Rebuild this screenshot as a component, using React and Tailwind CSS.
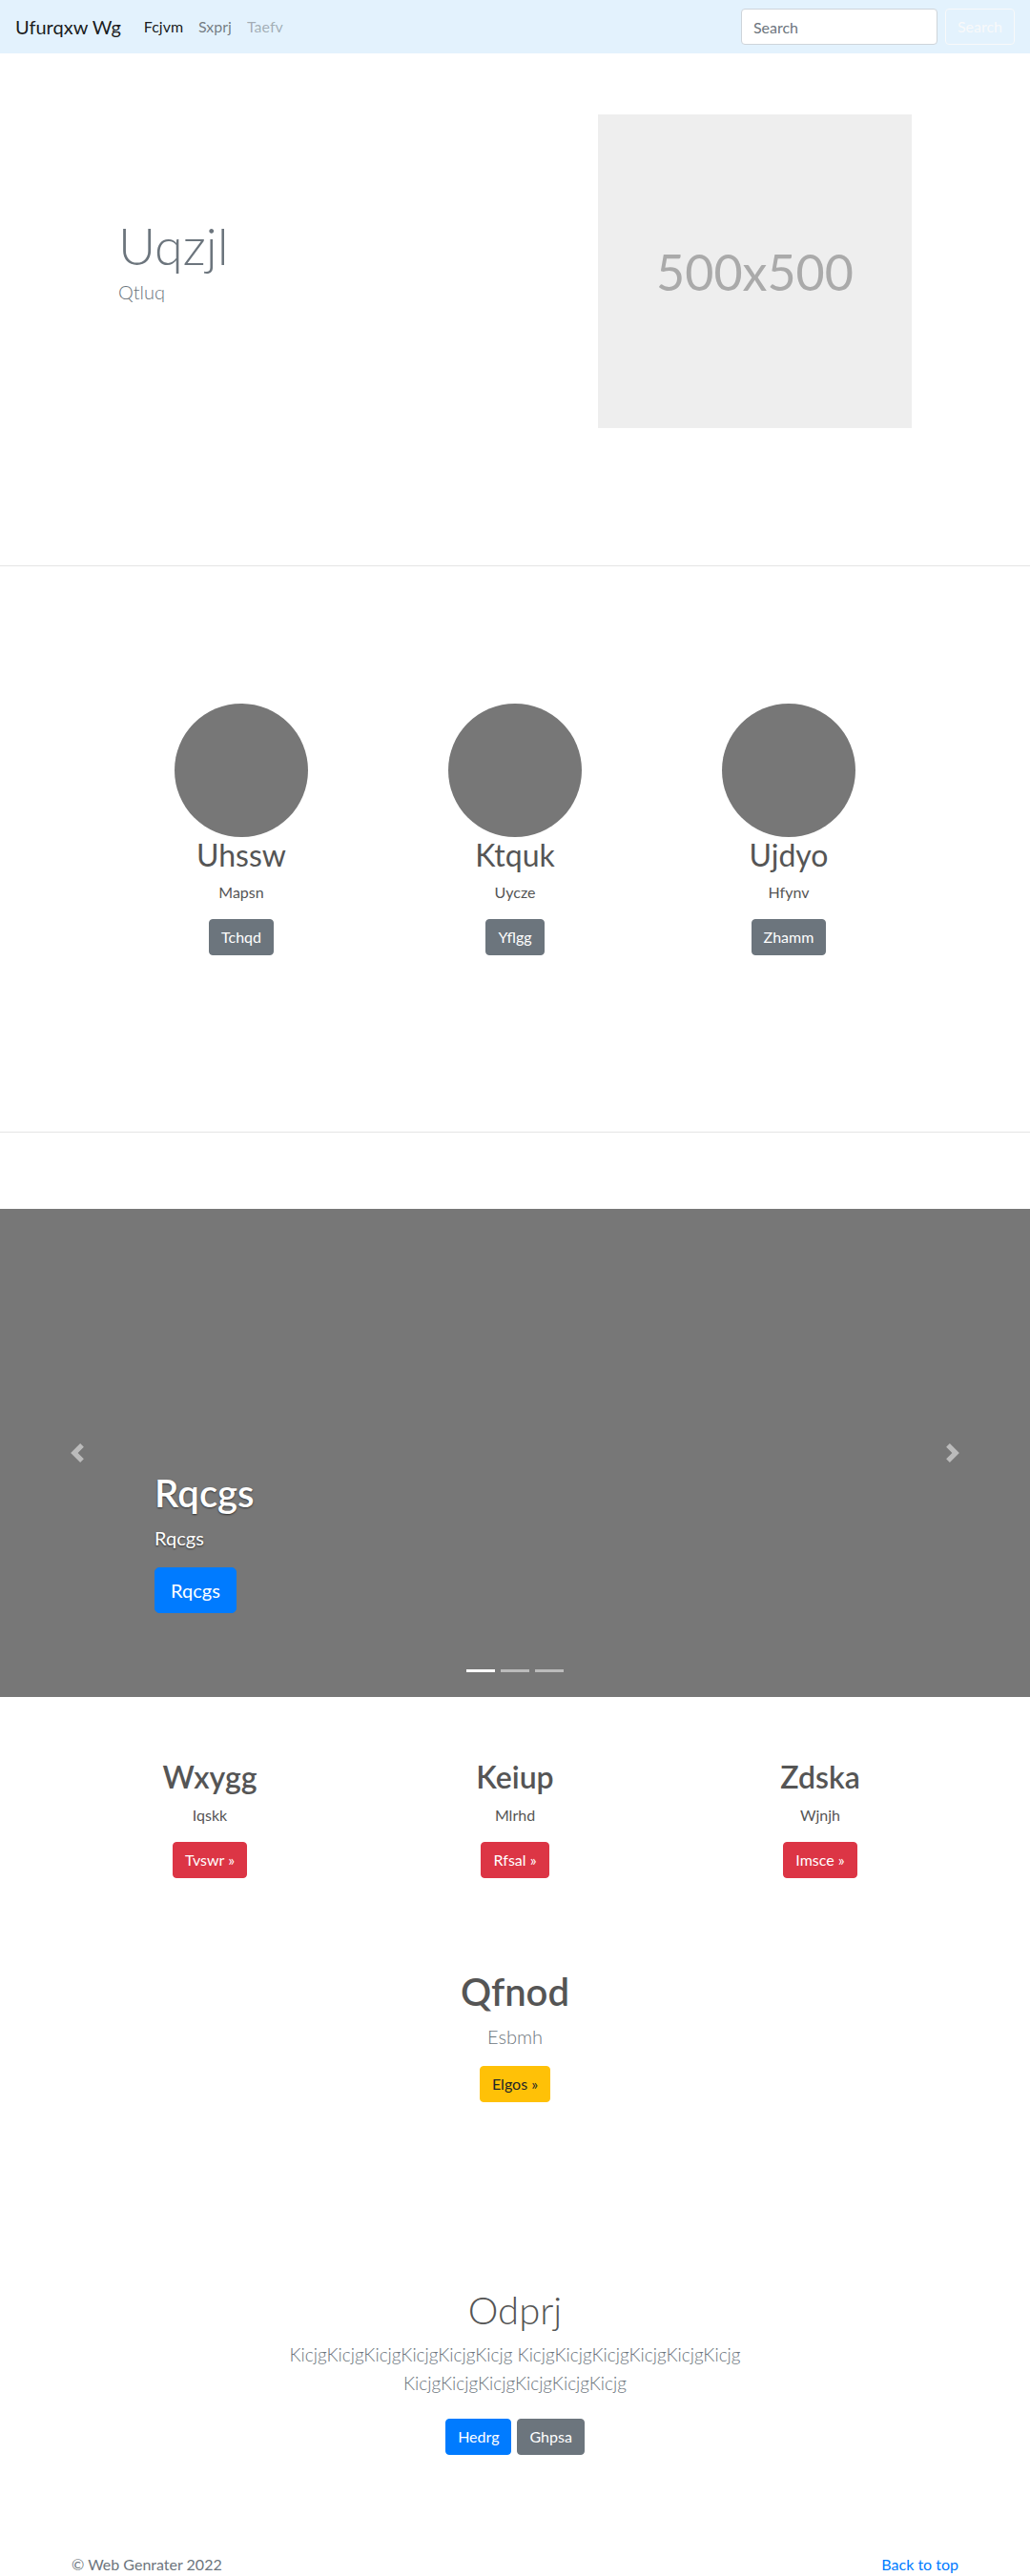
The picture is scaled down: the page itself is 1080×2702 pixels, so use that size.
import React from "react";

const Btn = ({ color, children, className = "" }) => (
  <button
    className={`inline-block rounded-[4px] border px-3 py-1.5 text-base leading-6 ${color} ${className}`}
  >
    {children}
  </button>
);

const teamMembers = [
  { name: "Uhssw", role: "Mapsn", action: "Tchqd" },
  { name: "Ktquk", role: "Uycze", action: "Yflgg" },
  { name: "Ujdyo", role: "Hfynv", action: "Zhamm" },
];

const features = [
  { title: "Wxygg", text: "Iqskk", action: "Tvswr »" },
  { title: "Keiup", text: "Mlrhd", action: "Rfsal »" },
  { title: "Zdska", text: "Wjnjh", action: "Imsce »" },
];

export default function App() {
  return (
    <div className="bg-white font-['Lato','Open_Sans',sans-serif] text-[#555]">
      {/* navbar */}
      <nav className="flex h-14 items-center bg-[#e3f2fd] px-4">
        <span className="mr-4 text-xl leading-[30px] text-black/90">Ufurqxw Wg</span>
        <div className="flex text-base">
          <span className="px-2 text-black/90">Fcjvm</span>
          <span className="px-2 text-black/50">Sxprj</span>
          <span className="px-2 text-black/30">Taefv</span>
        </div>
        <div className="ml-auto flex items-center">
          <input
            placeholder="Search"
            className="mr-2 h-[38px] w-[206px] rounded-[4px] border border-[#ced4da] bg-white px-3 text-base text-[#495057] placeholder:text-[#6c757d] outline-none"
          />
          <button className="h-[38px] rounded-[4px] border border-[#f8f9fa] px-3 text-base text-[#f8f9fa]">
            Search
          </button>
        </div>
      </nav>

      {/* hero */}
      <section className="pb-36 pt-16">
        <div className="mx-auto flex w-[960px] items-center">
          <div className="w-[480px] pl-16">
            <h1 className="text-[54px] font-light leading-[1.2] text-[#6c757d]">Uqzjl</h1>
            <p className="mb-[22px] text-xl font-light leading-[30px] text-[#6c757d]">Qtluq</p>
          </div>
          <div className="pl-[87px]">
            <div className="flex h-[329px] w-[329px] items-center justify-center bg-[#eee] text-[52px] text-[#aaa]">
              500x500
            </div>
          </div>
        </div>
      </section>

      <hr className="border-0 border-t border-[#e5e5e5]" />

      {/* team */}
      <section className="pb-[185px] pt-36">
        <div className="mx-auto grid w-[861px] grid-cols-3">
          {teamMembers.map((m) => (
            <div key={m.name} className="flex flex-col items-center text-center">
              <div className="h-[140px] w-[140px] rounded-full bg-[#777]" />
              <h2 className="mb-2 text-[32px] leading-[1.2] text-[#555]">{m.name}</h2>
              <p className="mb-4 text-base leading-6 text-[#555]">{m.role}</p>
              <Btn color="border-[#6c757d] bg-[#6c757d] text-white">{m.action}</Btn>
            </div>
          ))}
        </div>
      </section>

      <hr className="border-0 border-t border-[#e5e5e5]" />

      {/* carousel */}
      <section className="relative mt-20 flex h-[512px] flex-col justify-end bg-[#777] pb-[88px] pl-[162px]">
        <div className="absolute inset-y-0 left-0 flex w-[162px] items-center justify-center">
          <svg width="20" height="20" viewBox="0 0 8 8" fill="#fff" opacity="0.5">
            <path d="M5.25 0l-4 4 4 4 1.5-1.5L4.25 4l2.5-2.5L5.25 0z" />
          </svg>
        </div>
        <div className="absolute inset-y-0 right-0 flex w-[162px] items-center justify-center">
          <svg width="20" height="20" viewBox="0 0 8 8" fill="#fff" opacity="0.5">
            <path d="M2.75 0l-1.5 1.5L3.75 4l-2.5 2.5L2.75 8l4-4-4-4z" />
          </svg>
        </div>
        <div className="relative text-white [text-shadow:0_1px_2px_rgba(0,0,0,.6)]">
          <h1 className="mb-2 text-[40px] font-semibold leading-[1.2]">Rqcgs</h1>
          <p className="mb-4 text-xl leading-[30px]">Rqcgs</p>
          <button className="rounded-[5px] border border-[#007bff] bg-[#007bff] px-4 py-2 text-xl leading-[30px] text-white [text-shadow:none]">
            Rqcgs
          </button>
        </div>
        <div className="absolute inset-x-0 bottom-[26px] flex justify-center gap-[6px]">
          <span className="h-[3px] w-[30px] bg-white" />
          <span className="h-[3px] w-[30px] bg-white/50" />
          <span className="h-[3px] w-[30px] bg-white/50" />
        </div>
      </section>

      {/* features */}
      <section className="pt-[65px]">
        <div className="mx-auto grid w-[960px] grid-cols-3">
          {features.map((f) => (
            <div key={f.title} className="flex flex-col items-center text-center">
              <h2 className="mb-2 text-[32px] font-semibold leading-[1.2] text-[#555]">{f.title}</h2>
              <p className="mb-4 text-base leading-6 text-[#555]">{f.text}</p>
              <Btn color="border-[#dc3545] bg-[#dc3545] text-white">{f.action}</Btn>
            </div>
          ))}
        </div>
        <div className="mt-[95px] flex flex-col items-center text-center">
          <h1 className="mb-2 text-[40px] font-semibold leading-[1.2] text-[#555]">Qfnod</h1>
          <p className="mb-4 text-xl font-light leading-[30px] text-[#6c757d]">Esbmh</p>
          <Btn color="border-[#ffc107] bg-[#ffc107] text-[#212529]">Elgos »</Btn>
        </div>
      </section>

      {/* album jumbotron */}
      <section className="mt-[194px] flex flex-col items-center text-center">
        <h1 className="mb-2 text-[40px] font-light leading-[1.2] text-[#555]">Odprj</h1>
        <p className="mb-[22px] w-[500px] text-[19px] font-light leading-[30px] text-[#6c757d]">
          KicjgKicjgKicjgKicjgKicjgKicjg KicjgKicjgKicjgKicjgKicjgKicjg KicjgKicjgKicjgKicjgKicjgKicjg
        </p>
        <div className="flex gap-[6px]">
          <Btn color="border-[#007bff] bg-[#007bff] text-white">Hedrg</Btn>
          <Btn color="border-[#6c757d] bg-[#6c757d] text-white">Ghpsa</Btn>
        </div>
      </section>

      {/* footer */}
      <footer className="mx-auto mt-[103px] flex w-[930px] justify-between pb-[5px] text-base leading-6">
        <span className="text-[#6c757d]">© Web Genrater 2022</span>
        <span className="text-[#007bff]">Back to top</span>
      </footer>
    </div>
  );
}
